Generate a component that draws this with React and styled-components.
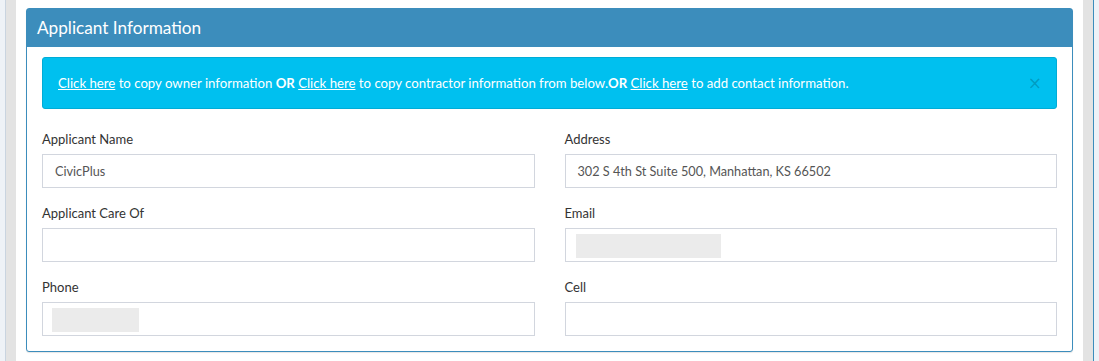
import React from "react";
import styled, { createGlobalStyle } from "styled-components";

const GlobalStyle = createGlobalStyle`
  html, body {
    margin: 0;
    padding: 0;
    background: #ffffff;
    font-family: Lato, "Noto Sans", sans-serif;
  }
  * { box-sizing: border-box; }
`;

function Field({ label, value, blur }) {
  return (
    <Group>
      <Label>{label}</Label>
      <InputBox>
        {value && <InputText>{value}</InputText>}
        {blur && <Blur $w={blur.w} $left={blur.left} />}
      </InputBox>
    </Group>
  );
}

function App() {
  return (
    <>
      <GlobalStyle />
      <Page>
        <Edge />
        <Gutter />
        <Main>
          <Panel>
            <PanelHeader>Applicant Information</PanelHeader>
            <PanelBody>
              <Alert>
                <AlertText>
                  <Link>Click here</Link> to copy owner information <b>OR</b>{" "}
                  <Link>Click here</Link> to copy contractor information from
                  below.<b>OR</b> <Link>Click here</Link> to add contact
                  information.
                </AlertText>
                <Close>×</Close>
              </Alert>
              <FormGrid>
                <Field label="Applicant Name" value="CivicPlus" />
                <Field
                  label="Address"
                  value="302 S 4th St Suite 500, Manhattan, KS 66502"
                />
                <Field label="Applicant Care Of" />
                <Field label="Email" blur={{ w: 145, left: 10 }} />
                <Field label="Phone" blur={{ w: 87, left: 9 }} />
                <Field label="Cell" />
              </FormGrid>
            </PanelBody>
          </Panel>
        </Main>
        <Gutter />
        <Edge $right />
      </Page>
    </>
  );
}

const Page = styled.div`
  display: flex;
  width: 100%;
  height: 361px;
  overflow: hidden;
`;

const Edge = styled.div`
  width: 6px;
  flex: none;
  background: #eef2f7;
  ${(p) =>
    p.$right
      ? "border-left: 1px solid #3c8dbc;"
      : "border-right: 1px solid #c9d4e0;"}
`;

const Gutter = styled.div`
  width: 10px;
  flex: none;
  background: #e3e3e3;
`;

const Main = styled.div`
  flex: 1;
  padding: 8px 10px 0 10px;
  background: #ffffff;
`;

const Panel = styled.section`
  border: 1px solid #3c8dbc;
  border-radius: 3px;
  background: #ffffff;
  box-shadow: 0 1px 1px rgba(0, 0, 0, 0.1);
`;

const PanelHeader = styled.h3`
  margin: 0;
  background: #3c8dbc;
  color: #ffffff;
  font-size: 17.2px;
  font-weight: 400;
  line-height: 20px;
  padding: 9px 10px 9px 10px;
  height: 38px;
`;

const PanelBody = styled.div`
  padding: 10px 15px 15px 15px;
`;

const Alert = styled.div`
  display: flex;
  align-items: center;
  background: #00c0ef;
  border: 1px solid #00acd6;
  border-radius: 3px;
  color: #ffffff;
  padding: 15px 14px 15px 15px;
  height: 52px;
  margin-bottom: 20px;
`;

const AlertText = styled.div`
  flex: 1;
  font-size: 13.2px;
  line-height: 20px;
  b {
    font-weight: 700;
  }
`;

const Link = styled.span`
  text-decoration: underline;
  color: #ffffff;
`;

const Close = styled.span`
  font-size: 17px;
  line-height: 20px;
  color: rgba(0, 0, 0, 0.2);
  font-family: "DejaVu Sans", sans-serif;
`;

const FormGrid = styled.div`
  display: grid;
  grid-template-columns: 1fr 1fr;
  column-gap: 30px;
  row-gap: 15px;
`;

const Group = styled.div`
  display: flex;
  flex-direction: column;
`;

const Label = styled.label`
  font-size: 13px;
  line-height: 20px;
  color: #333333;
  margin-bottom: 5px;
`;

const InputBox = styled.div`
  position: relative;
  height: 34px;
  border: 1px solid #d2d6de;
  display: flex;
  align-items: center;
  padding: 0 12px;
`;

const InputText = styled.span`
  font-size: 12.7px;
  color: #555555;
`;

const Blur = styled.div`
  position: absolute;
  top: 5px;
  left: ${(p) => p.$left}px;
  width: ${(p) => p.$w}px;
  height: 24px;
  background: #ebebeb;
`;

export default App;
